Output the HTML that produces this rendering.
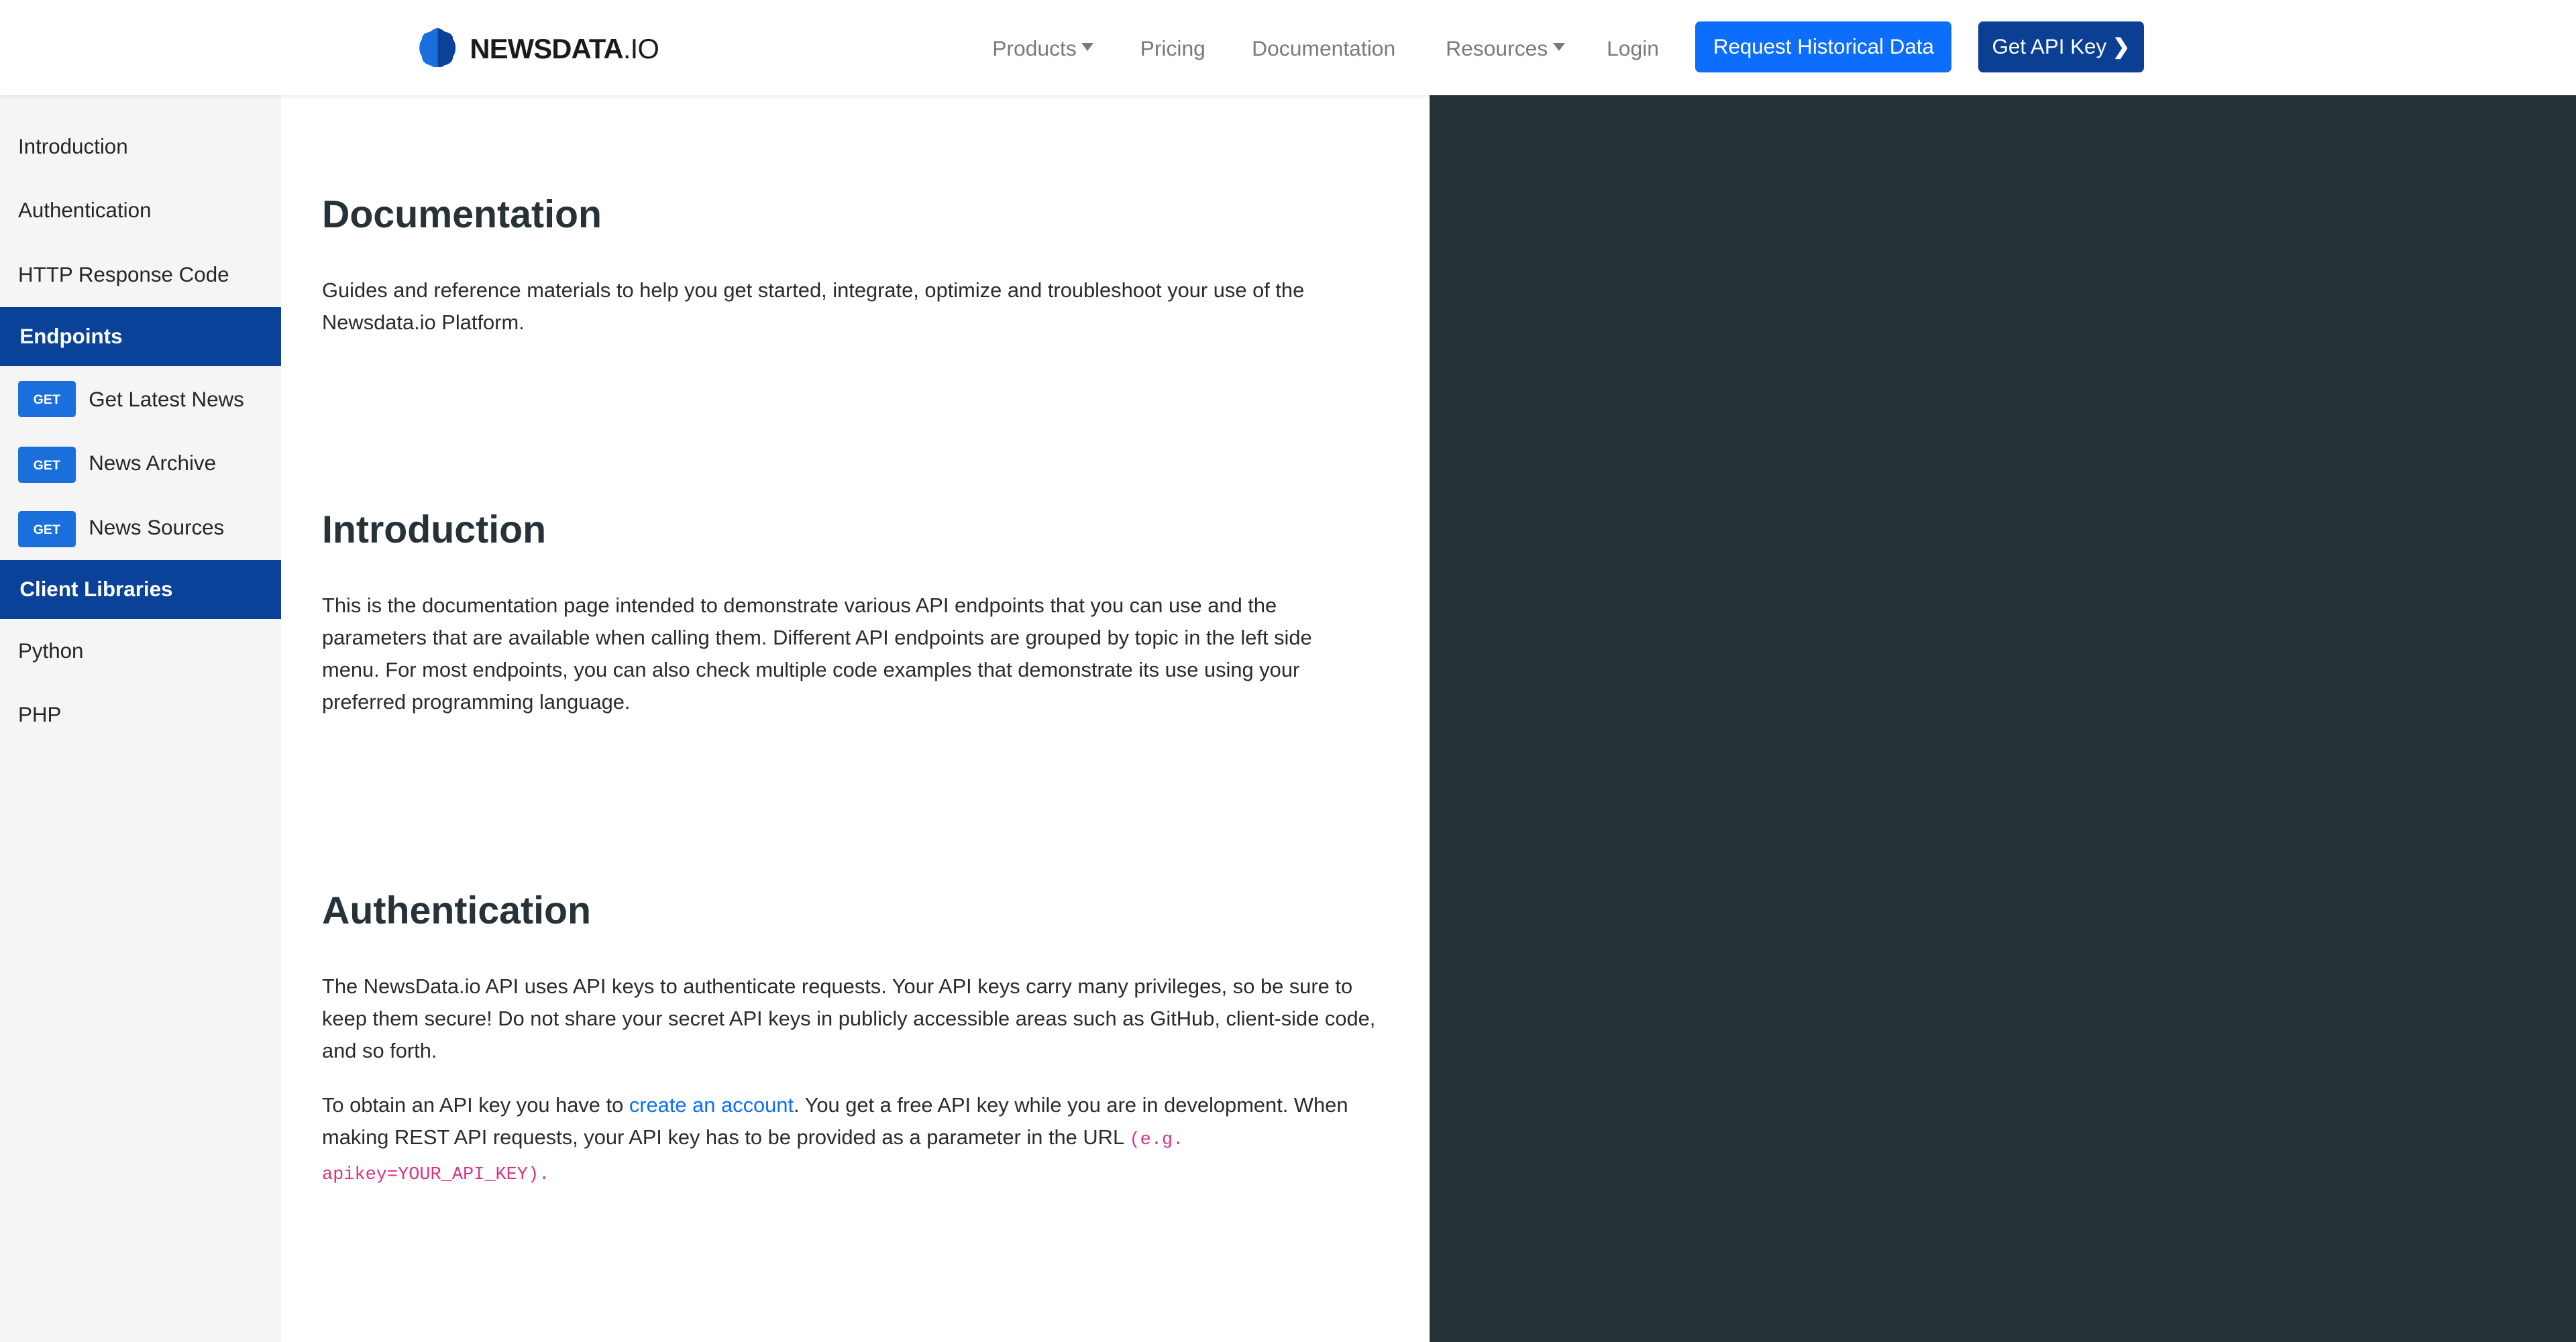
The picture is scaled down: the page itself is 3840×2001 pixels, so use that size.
<!DOCTYPE html>
<html><head><meta charset="utf-8"><style>
html,body{margin:0;padding:0;}
body{width:1568px;height:817px;zoom:2.449;overflow:hidden;font-family:"Liberation Sans",sans-serif;background:#fff;position:relative;}
.hdr{position:absolute;left:0;top:0;width:1568px;height:58px;background:#fff;box-shadow:0 1px 3px rgba(0,0,0,.08);z-index:2;}
.logo{position:absolute;left:255px;top:17px;}
.logotext{position:absolute;left:286px;top:20px;font-size:17px;font-weight:bold;color:#1b1b1b;letter-spacing:-0.3px;}
.logotext span{font-weight:normal;}
.nav{position:absolute;top:22px;font-size:13px;color:#7a7a7a;}
.caret{display:inline-block;width:0;height:0;border-left:4px solid transparent;border-right:4px solid transparent;border-top:5px solid #7a7a7a;vertical-align:3px;margin-left:3px;}
.btn{position:absolute;top:13px;height:31px;border-radius:3px;color:#fff;font-size:12.8px;line-height:31px;text-align:center;}
.side{position:absolute;left:0;top:58px;width:171px;height:759px;background:#f5f5f5;}
.si{position:absolute;left:11px;font-size:12.8px;color:#262626;}
.band{position:absolute;left:0;width:171px;height:36px;background:#0a4299;color:#fff;font-weight:bold;font-size:12.8px;line-height:36px;padding-left:12px;box-sizing:border-box;}
.get{position:absolute;left:11px;width:35px;height:22px;background:#1b6fdc;border-radius:2px;color:#fff;font-size:8px;font-weight:bold;text-align:center;line-height:23px;}
.dark{position:absolute;left:870px;top:58px;width:698px;height:759px;background:#263238;}
h1{position:absolute;left:196px;margin:0;font-size:23.4px;color:#263238;font-weight:bold;white-space:nowrap;}
p{position:absolute;left:196px;margin:0;font-size:12.6px;line-height:19.6px;color:#2b2b2b;white-space:nowrap;}
a{color:#0d6efd;text-decoration:none;}
code{font-family:"Liberation Mono",monospace;color:#d63384;font-size:11px;}
</style></head><body>
<div class="hdr">
<svg class="logo" width="23" height="24" viewBox="0 0 23 24"><path d="M11.5 0C9 0 8 2 6 2.5 3 3 2 5 2 7 0 9 0 15 2 17 2 20 4 22 7 22.5 9 24 11.5 24 11.5 24Z" fill="#1b6fdc"/><path d="M11.5 0C14 0 15 2 17 2.5 20 3 21 5 21 7 23 9 23 15 21 17 21 20 19 22 16 22.5 14 24 11.5 24 11.5 24Z" fill="#0a4299"/></svg>
<div class="logotext">NEWSDATA<span>.IO</span></div>
<div class="nav" style="left:604px">Products<span class="caret"></span></div>
<div class="nav" style="left:694px">Pricing</div>
<div class="nav" style="left:762px">Documentation</div>
<div class="nav" style="left:880px">Resources<span class="caret"></span></div>
<div class="nav" style="left:978px">Login</div>
<div class="btn" style="left:1032px;width:156px;background:#0d6efd">Request Historical Data</div>
<div class="btn" style="left:1204px;width:101px;background:#0a3f94">Get API Key <b>&#x276F;</b></div>
</div>
<div class="side">
<div class="si" style="top:24px">Introduction</div>
<div class="si" style="top:63px">Authentication</div>
<div class="si" style="top:102px">HTTP Response Code</div>
<div class="band" style="top:129px">Endpoints</div>
<div class="get" style="top:174px">GET</div><div class="si" style="left:54px;top:178px">Get Latest News</div>
<div class="get" style="top:214px">GET</div><div class="si" style="left:54px;top:217px">News Archive</div>
<div class="get" style="top:253px">GET</div><div class="si" style="left:54px;top:256px">News Sources</div>
<div class="band" style="top:283px">Client Libraries</div>
<div class="si" style="top:331px">Python</div>
<div class="si" style="top:370px">PHP</div>
</div>
<div class="dark"></div>
<h1 style="top:117px">Documentation</h1>
<p style="top:167px">Guides and reference materials to help you get started, integrate, optimize and troubleshoot your use of the<br>Newsdata.io Platform.</p>
<h1 style="top:309px">Introduction</h1>
<p style="top:359px">This is the documentation page intended to demonstrate various API endpoints that you can use and the<br>parameters that are available when calling them. Different API endpoints are grouped by topic in the left side<br>menu. For most endpoints, you can also check multiple code examples that demonstrate its use using your<br>preferred programming language.</p>
<h1 style="top:541px">Authentication</h1>
<p style="top:591px">The NewsData.io API uses API keys to authenticate requests. Your API keys carry many privileges, so be sure to<br>keep them secure! Do not share your secret API keys in publicly accessible areas such as GitHub, client-side code,<br>and so forth.</p>
<p style="top:663px">To obtain an API key you have to <a>create an account</a>. You get a free API key while you are in development. When<br>making REST API requests, your API key has to be provided as a parameter in the URL <code>(e.g.</code><br><code>apikey=YOUR_API_KEY).</code></p>
</body></html>
